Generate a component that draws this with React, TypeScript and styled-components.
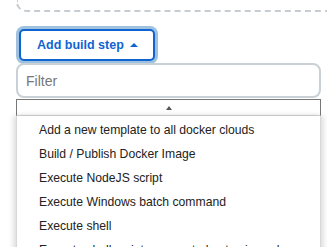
import React from "react";
import styled, { createGlobalStyle } from "styled-components";

const Global = createGlobalStyle`
  html, body { margin: 0; padding: 0; background: #fff; }
  body { font-family: "Liberation Sans", Arial, sans-serif; overflow: hidden; width: 327px; height: 247px; }
`;

const Page = styled.div`
  width: 327px;
  padding-left: 16px;
  box-sizing: border-box;
  display: flex;
  flex-direction: column;
  & > * { flex-shrink: 0; }
`;

const DashedBox = styled.div`
  height: 12px;
  margin-right: -30px;
  border: 2px dashed #c6ccd1;
  border-top: none;
  border-radius: 0 0 10px 10px;
  box-sizing: border-box;
`;

const ButtonRow = styled.div`
  padding: 17px 0 0 3px;
  display: flex;
`;

const AddButton = styled.button`
  display: flex;
  align-items: center;
  gap: 6px;
  height: 32px;
  width: 136px;
  box-sizing: border-box;
  padding: 0 0 0 16px;
  border: 2px solid #0f64d2;
  border-radius: 5px;
  background: #fff;
  color: #0f64d2;
  font-family: "Liberation Sans", Arial, sans-serif;
  font-weight: 700;
  font-size: 12.5px;
  box-shadow: 0 0 0 3px #9ec1e0;
`;

const Caret = styled.span`
  width: 0;
  height: 0;
  border-left: 4px solid transparent;
  border-right: 4px solid transparent;
  border-bottom: 4px solid #0f64d2;
`;

const FilterInput = styled.input`
  margin-top: 2px;
  width: 305px;
  height: 35px;
  box-sizing: border-box;
  border: 2px solid #c9d1d6;
  border-radius: 8px;
  padding: 0 8px;
  font-family: "Liberation Sans", Arial, sans-serif;
  font-size: 14px;
  color: #333;
  outline: none;
  &::placeholder { color: #777; }
`;

const Dropdown = styled.div`
  margin-top: 1px;
  width: 305px;
  display: flex;
  flex-direction: column;
`;

const ScrollBar = styled.div`
  height: 17px;
  box-sizing: border-box;
  border: 1px solid #777;
  border-bottom: 1px solid #ddd;
  background: #fff;
  display: flex;
  align-items: center;
  justify-content: center;
`;

const SmallArrow = styled.span`
  width: 0;
  height: 0;
  border-left: 3px solid transparent;
  border-right: 3px solid transparent;
  border-bottom: 4px solid #555;
`;

const List = styled.ul`
  list-style: none;
  margin: 0;
  padding: 2px 0 0;
  background: #fff;
  box-shadow: -3px 0 5px rgba(0, 0, 0, 0.12), 3px 0 5px rgba(0, 0, 0, 0.12);
  border-left: 1px solid #d8d8d8;
  border-right: 1px solid #d8d8d8;
`;

const Item = styled.li`
  height: 24px;
  line-height: 24px;
  padding-left: 22px;
  font-size: 12.2px;
  color: #222;
  white-space: nowrap;
`;

const items = [
  "Add a new template to all docker clouds",
  "Build / Publish Docker Image",
  "Execute NodeJS script",
  "Execute Windows batch command",
  "Execute shell",
  "Execute shell script on remote host using ssh",
];

export default function App() {
  return (
    <>
      <Global />
      <Page>
        <DashedBox />
        <ButtonRow>
          <AddButton>
            Add build step
            <Caret />
          </AddButton>
        </ButtonRow>
        <FilterInput placeholder="Filter" />
        <Dropdown>
          <ScrollBar>
            <SmallArrow />
          </ScrollBar>
          <List>
            {items.map((t) => (
              <Item key={t}>{t}</Item>
            ))}
          </List>
        </Dropdown>
      </Page>
    </>
  );
}
